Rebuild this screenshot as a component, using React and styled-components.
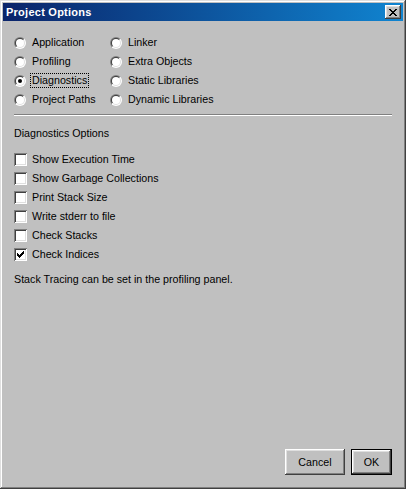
import React from "react";
import styled, { createGlobalStyle } from "styled-components";

const GlobalStyle = createGlobalStyle`
  html, body {
    margin: 0;
    padding: 0;
    background: #c0c0c0;
  }
  body {
    font-family: "Liberation Sans", Arial, sans-serif;
    font-size: 10.7px;
    color: #000;
  }
`;

const Window = styled.div`
  box-sizing: border-box;
  width: 406px;
  height: 489px;
  padding: 3px;
  background: #c0c0c0;
  box-shadow: inset -1px -1px #404040, inset 1px 1px #dfdfdf,
    inset -2px -2px #808080, inset 2px 2px #ffffff;
  display: flex;
  flex-direction: column;
`;

const TitleBar = styled.div`
  height: 18px;
  display: flex;
  align-items: center;
  justify-content: space-between;
  padding: 0 2px 0 3px;
  background: linear-gradient(90deg, #0a246a, #1084d0);
`;

const Title = styled.span`
  color: #ffffff;
  font-weight: bold;
  font-size: 11px;
  letter-spacing: 0.25px;
`;

const CloseButton = styled.div`
  box-sizing: border-box;
  width: 16px;
  height: 14px;
  background: #c0c0c0;
  display: flex;
  align-items: center;
  justify-content: center;
  box-shadow: inset -1px -1px #404040, inset 1px 1px #ffffff,
    inset -2px -2px #808080, inset 2px 2px #dfdfdf;
`;

const Content = styled.div`
  flex: 1;
  display: flex;
  flex-direction: column;
  padding: 12px 11px 0 11px;
`;

const RadioGrid = styled.div`
  display: grid;
  grid-template-columns: 96px auto;
  grid-auto-flow: column;
  grid-template-rows: repeat(4, 19px);
  margin-bottom: 5px;
`;

const Row = styled.label`
  display: flex;
  align-items: center;
  height: 19px;
  gap: ${({ gap }) => gap || 5}px;
  white-space: nowrap;
`;

const RadioOuter = styled.span`
  position: relative;
  width: 12px;
  height: 12px;
  border-radius: 50%;
  flex: none;
  background: linear-gradient(135deg, #808080 50%, #ffffff 50%);
`;

const RadioInner = styled.span`
  position: absolute;
  inset: 1px;
  border-radius: 50%;
  background: linear-gradient(135deg, #404040 50%, #dfdfdf 50%);
`;

const RadioFace = styled.span`
  position: absolute;
  inset: 1px;
  border-radius: 50%;
  background: #ffffff;
  display: flex;
  align-items: center;
  justify-content: center;

  &::after {
    content: "";
    width: 4px;
    height: 4px;
    border-radius: 50%;
    background: #000;
    display: ${({ checked }) => (checked ? "block" : "none")};
  }
`;

const LabelText = styled.span`
  padding: 0 1px;
  line-height: 13px;
  outline: ${({ focused }) => (focused ? "1px dotted #000" : "none")};
  margin-left: -1px;
`;

const Separator = styled.div`
  height: 1px;
  background: #808080;
  border-bottom: 1px solid #ffffff;
`;

const SectionLabel = styled.div`
  height: 19px;
  display: flex;
  align-items: center;
  margin-top: 7px;
  margin-bottom: 8px;
`;

const CheckList = styled.div`
  display: flex;
  flex-direction: column;
`;

const CheckBox = styled.span`
  position: relative;
  box-sizing: border-box;
  width: 13px;
  height: 13px;
  flex: none;
  background: #ffffff;
  box-shadow: inset 1px 1px #808080, inset -1px -1px #ffffff,
    inset 2px 2px #404040, inset -2px -2px #dfdfdf;

  svg {
    position: absolute;
    left: 3px;
    top: 3px;
  }
`;

const Note = styled.div`
  height: 19px;
  display: flex;
  align-items: center;
  margin-top: 5px;
`;

const Footer = styled.div`
  display: flex;
  justify-content: flex-end;
  gap: 6px;
  padding: 0 11px 11px 0;
`;

const Button = styled.div`
  box-sizing: border-box;
  width: ${({ w }) => w}px;
  height: 26px;
  display: flex;
  align-items: center;
  justify-content: center;
  background: #c0c0c0;
  box-shadow: ${({ primary }) =>
    primary
      ? "inset 0 0 0 1px #000, inset -2px -2px #404040, inset 2px 2px #ffffff, inset -3px -3px #808080, inset 3px 3px #dfdfdf"
      : "inset -1px -1px #404040, inset 1px 1px #ffffff, inset -2px -2px #808080, inset 2px 2px #dfdfdf"};
`;

const Radio = ({ label, checked, focused }) => (
  <Row gap={6}>
    <RadioOuter>
      <RadioInner>
        <RadioFace checked={checked} />
      </RadioInner>
    </RadioOuter>
    <LabelText focused={focused}>{label}</LabelText>
  </Row>
);

const Check = ({ label, checked }) => (
  <Row gap={5}>
    <CheckBox>
      {checked && (
        <svg width="7" height="7" viewBox="0 0 7 7" shapeRendering="crispEdges">
          <path
            d="M0 2h1v3H0zM1 3h1v3H1zM2 4h1v3H2zM3 3h1v3H3zM4 2h1v3H4zM5 1h1v3H5zM6 0h1v3H6z"
            fill="#000"
          />
        </svg>
      )}
    </CheckBox>
    <LabelText>{label}</LabelText>
  </Row>
);

const radios = [
  { label: "Application" },
  { label: "Profiling" },
  { label: "Diagnostics", checked: true, focused: true },
  { label: "Project Paths" },
  { label: "Linker" },
  { label: "Extra Objects" },
  { label: "Static Libraries" },
  { label: "Dynamic Libraries" },
];

const checks = [
  { label: "Show Execution Time" },
  { label: "Show Garbage Collections" },
  { label: "Print Stack Size" },
  { label: "Write stderr to file" },
  { label: "Check Stacks" },
  { label: "Check Indices", checked: true },
];

export default function App() {
  return (
    <>
      <GlobalStyle />
      <Window>
        <TitleBar>
          <Title>Project Options</Title>
          <CloseButton>
            <svg width="8" height="7" viewBox="0 0 8 7" shapeRendering="crispEdges">
              <path
                d="M0 0h2v1H0zM6 0h2v1H6zM1 1h2v1H1zM5 1h2v1H5zM2 2h4v1H2zM3 3h2v1H3zM2 4h4v1H2zM1 5h2v1H1zM5 5h2v1H5zM0 6h2v1H0zM6 6h2v1H6z"
                fill="#000"
              />
            </svg>
          </CloseButton>
        </TitleBar>
        <Content>
          <RadioGrid>
            {radios.map((r) => (
              <Radio key={r.label} {...r} />
            ))}
          </RadioGrid>
          <Separator />
          <SectionLabel>Diagnostics Options</SectionLabel>
          <CheckList>
            {checks.map((c) => (
              <Check key={c.label} {...c} />
            ))}
          </CheckList>
          <Note>Stack Tracing can be set in the profiling panel.</Note>
        </Content>
        <Footer>
          <Button w={60}>Cancel</Button>
          <Button w={41} primary>
            OK
          </Button>
        </Footer>
      </Window>
    </>
  );
}
